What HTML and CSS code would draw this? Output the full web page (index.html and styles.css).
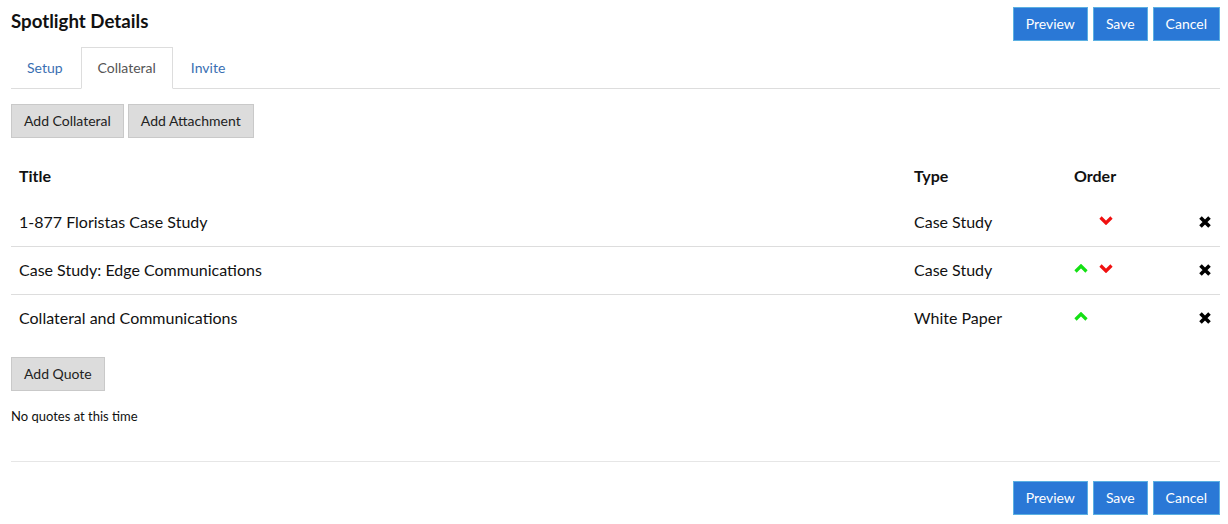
FILE: index.html
```html
<!DOCTYPE html>
<html lang="en">

<head>
    <meta charset="UTF-8">
    <meta name="viewport" content="width=device-width, initial-scale=1.0">
    <title>Spotlight Details</title>
    <link rel="stylesheet" href="styles.css">
</head>

<body>

    <div class="page">
        <div class="page-header">
            <h1>Spotlight Details</h1>
            <div class="actions">
                <button class="btn btn-primary">Preview</button>
                <button class="btn btn-primary">Save</button>
                <button class="btn btn-primary">Cancel</button>
            </div>
        </div>

        <ul class="tabs">
            <li><a href="#">Setup</a></li>
            <li class="active"><a href="#">Collateral</a></li>
            <li><a href="#">Invite</a></li>
        </ul>

        <div class="toolbar">
            <button class="btn">Add Collateral</button>
            <button class="btn">Add Attachment</button>
        </div>

        <table class="collateral">
            <thead>
                <tr>
                    <th class="col-title">Title</th>
                    <th class="col-type">Type</th>
                    <th class="col-order">Order</th>
                    <th class="col-remove"></th>
                </tr>
            </thead>
            <tbody>
                <tr>
                    <td>1-877 Floristas Case Study</td>
                    <td>Case Study</td>
                    <td class="order">
                        <span class="arrow"></span><span class="arrow down"><svg viewBox="0 0 14 9" width="14" height="9"><path d="M1.5 1.5 L7 7 L12.5 1.5" /></svg></span>
                    </td>
                    <td class="remove"><svg viewBox="0 0 14 14" width="14" height="14"><path d="M2.5 2.5 L11.5 11.5 M11.5 2.5 L2.5 11.5" /></svg></td>
                </tr>
                <tr>
                    <td>Case Study: Edge Communications</td>
                    <td>Case Study</td>
                    <td class="order">
                        <span class="arrow up"><svg viewBox="0 0 14 9" width="14" height="9"><path d="M1.5 7.5 L7 2 L12.5 7.5" /></svg></span><span class="arrow down"><svg viewBox="0 0 14 9" width="14" height="9"><path d="M1.5 1.5 L7 7 L12.5 1.5" /></svg></span>
                    </td>
                    <td class="remove"><svg viewBox="0 0 14 14" width="14" height="14"><path d="M2.5 2.5 L11.5 11.5 M11.5 2.5 L2.5 11.5" /></svg></td>
                </tr>
                <tr>
                    <td>Collateral and Communications</td>
                    <td>White Paper</td>
                    <td class="order">
                        <span class="arrow up"><svg viewBox="0 0 14 9" width="14" height="9"><path d="M1.5 7.5 L7 2 L12.5 7.5" /></svg></span>
                    </td>
                    <td class="remove"><svg viewBox="0 0 14 14" width="14" height="14"><path d="M2.5 2.5 L11.5 11.5 M11.5 2.5 L2.5 11.5" /></svg></td>
                </tr>
            </tbody>
        </table>

        <div class="toolbar quote-bar">
            <button class="btn">Add Quote</button>
        </div>

        <p class="empty">No quotes at this time</p>

        <hr>

        <div class="actions footer">
            <button class="btn btn-primary">Preview</button>
            <button class="btn btn-primary">Save</button>
            <button class="btn btn-primary">Cancel</button>
        </div>
    </div>

</body>

</html>
```

FILE: styles.css
```css
body {
    font-family: Lato, "Open Sans", Arial, sans-serif;
    margin: 0;
    padding: 0;
    background-color: #fff;
    color: #111;
}

.page {
    padding: 0 8px 0 11px;
}

.page-header {
    display: flex;
    justify-content: space-between;
    align-items: flex-start;
    height: 47px;
}

h1 {
    margin: 10px 0 0;
    font-size: 18.7px;
    line-height: 22px;
    font-weight: bold;
    color: #111;
}

.actions {
    display: flex;
    gap: 5px;
    margin-top: 7px;
}

.btn {
    font-family: inherit;
    font-size: 14px;
    line-height: 20px;
    padding: 6px 12px;
    border: 1px solid #c9c9c9;
    border-radius: 0;
    background-color: #dcdcdc;
    color: #222;
    cursor: pointer;
}

.btn-primary {
    background-color: #2a78d6;
    border-color: #5bb0e2;
    color: #fff;
}

.tabs {
    display: flex;
    list-style: none;
    margin: 0;
    padding: 0;
    border-bottom: 1px solid #ddd;
}

.tabs li {
    margin-right: 2px;
    margin-bottom: -1px;
}

.tabs a {
    display: block;
    padding: 10px 15px;
    line-height: 20px;
    font-size: 14px;
    color: #3a6fb2;
    text-decoration: none;
    border: 1px solid transparent;
}

.tabs .active a {
    padding: 10px 16px;
    color: #555;
    background-color: #fff;
    border-color: #ddd #ddd transparent;
}

.toolbar {
    display: flex;
    gap: 4px;
    margin-top: 15px;
}

.collateral {
    width: 100%;
    border-collapse: collapse;
    margin-top: 15px;
    font-size: 16px;
}

.collateral th {
    text-align: left;
    font-weight: bold;
    padding: 13px 8px;
    line-height: 20px;
}

.collateral td {
    padding: 13px 8px 14px;
    line-height: 20px;
    border-top: 1px solid #ddd;
}

.collateral tbody tr:first-child td {
    border-top: none;
}

.col-type {
    width: 144px;
}

.col-order {
    width: 88px;
}

.col-remove {
    width: 34px;
}

.order {
    white-space: nowrap;
}

.arrow {
    display: inline-block;
    width: 14px;
    height: 9px;
    margin-right: 11px;
    vertical-align: 3px;
}

.arrow svg {
    display: block;
    fill: none;
    stroke-width: 3.2;
}

.arrow.up svg {
    stroke: #14e014;
}

.arrow.down svg {
    stroke: #f01010;
}

.remove {
    text-align: right;
}

.remove svg {
    display: inline-block;
    vertical-align: -1px;
    fill: none;
    stroke: #000;
    stroke-width: 3.6;
}

.quote-bar {
    margin-top: 15px;
}

.empty {
    margin: 15px 0 0;
    font-size: 13px;
    line-height: 20px;
}

hr {
    border: 0;
    border-top: 1px solid #e6e6e6;
    margin: 35px 0 19px;
}

.footer {
    justify-content: flex-end;
    margin-top: 0;
}
```
